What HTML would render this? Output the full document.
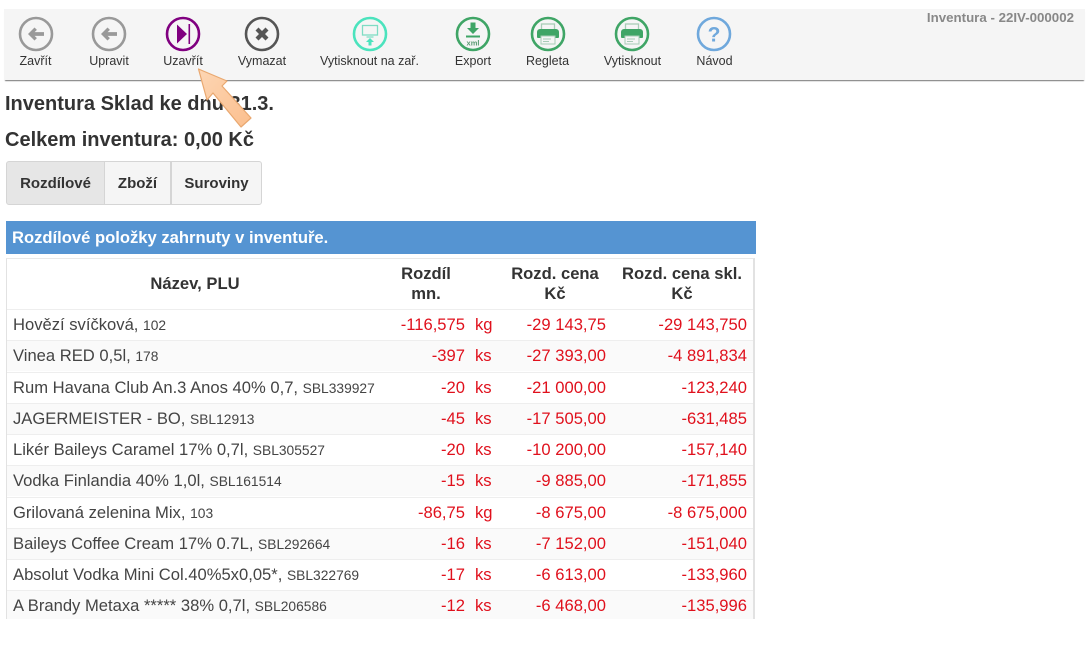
<!DOCTYPE html>
<html lang="cs">
<head>
<meta charset="utf-8">
<title>Inventura</title>
<style>
html,body{margin:0;padding:0;background:#fff;}
body{width:1088px;height:656px;position:relative;overflow:hidden;font-family:"Liberation Sans",sans-serif;color:#333;}
.a{position:absolute;white-space:nowrap;}
#bar{left:4px;top:9px;width:1081px;height:71px;background:#f5f5f5;box-shadow:0 2px 1px -1px #777;}
.lb{font-size:12.500px;top:54px;line-height:14px;transform:translateX(-50%);color:#333;}
svg.i{position:absolute;top:15.500px;width:36px;height:36px;}
.h{font-weight:bold;font-size:20px;line-height:22px;color:#333;left:5px;}
.tab{top:161px;height:42px;border:1px solid #d5d5d5;background:#f5f5f5;font-weight:bold;font-size:15px;line-height:43px;text-align:center;}
#tw{left:6px;top:258px;width:749px;height:361px;overflow:hidden;border-left:1px solid #e2e2e2;border-right:2px solid #e2e2e2;border-top:1px solid #e8e8e8;box-sizing:border-box;}
.r{position:absolute;left:0;width:747px;height:31px;border-top:1px solid #eee;box-sizing:border-box;}
.t{position:absolute;font-size:16.600px;line-height:20px;white-space:nowrap;top:5px;}
.n{left:6px;color:#444;}
.n small{font-size:13.800px;}
.m{color:#e0101c;}
.u{left:468px;}.q{right:289px;}.p{right:148px;}.s{right:7px;}
.th{position:absolute;font-weight:bold;font-size:16.600px;line-height:20px;text-align:center;color:#333;}
</style>
</head>
<body>
<div class="a" id="bar"></div>

<svg class="i" style="left:18px" viewBox="0 0 36 36"><circle cx="18" cy="18" r="16" fill="none" stroke="#999" stroke-width="2.600"/><path d="M10 18l6.500-6.500 2.400 2.400-2.300 2.200h9.400v3.800h-9.400l2.300 2.200-2.400 2.400z" fill="#999"/></svg>
<svg class="i" style="left:91px" viewBox="0 0 36 36"><circle cx="18" cy="18" r="16" fill="none" stroke="#999" stroke-width="2.600"/><path d="M10 18l6.500-6.500 2.400 2.400-2.300 2.200h9.400v3.800h-9.400l2.300 2.200-2.400 2.400z" fill="#999"/></svg>
<svg class="i" style="left:165px" viewBox="0 0 36 36"><circle cx="18" cy="18" r="16" fill="none" stroke="#800080" stroke-width="2.600"/><path d="M12 8.500L22 18 12 27.500z" fill="#800080"/><rect x="23.500" y="8" width="1.600" height="20" fill="#800080"/></svg>
<svg class="i" style="left:244px" viewBox="0 0 36 36"><circle cx="18" cy="18" r="16" fill="none" stroke="#555" stroke-width="2.600"/><path d="M14.500 11.500L18 15l3.500-3.500 3 3L21 18l3.500 3.500-3 3L18 21l-3.500 3.500-3-3L15 18l-3.500-3.500z" fill="#555"/></svg>
<svg class="i" style="left:352px" viewBox="0 0 36 36"><circle cx="18" cy="18" r="16" fill="none" stroke="#4be3bd" stroke-width="2.600"/><rect x="10.500" y="9.500" width="15" height="9.500" fill="none" stroke="#7fdcc4" stroke-width="1.300"/><path d="M14.500 21h7" stroke="#7fdcc4" stroke-width="1.200"/><path d="M18 22l4 4h-2.500v3.500h-3V26H14z" fill="#4be3bd"/></svg>
<svg class="i" style="left:455px" viewBox="0 0 36 36"><circle cx="18" cy="18" r="16" fill="none" stroke="#3fa566" stroke-width="2.600"/><path d="M15.500 6.500h5v5.500h3.500L18 18l-6-6h3.500z" fill="#3fa566"/><rect x="11" y="19.500" width="14" height="2" fill="#3fa566"/><text x="18" y="29.500" font-family="Liberation Sans,sans-serif" font-size="7.500" font-weight="bold" text-anchor="middle" fill="#5a9a72">xml</text></svg>
<svg class="i" style="left:530px" viewBox="0 0 36 36"><circle cx="18" cy="18" r="16" fill="none" stroke="#3fa566" stroke-width="2.600"/><rect x="11.500" y="8" width="13" height="6" fill="none" stroke="#a8cdb6" stroke-width="1.300"/><path d="M10 13h16a3 3 0 0 1 3 3v5a1 1 0 0 1-1 1H8a1 1 0 0 1-1-1v-5a3 3 0 0 1 3-3z" fill="#3fa566"/><rect x="11" y="20" width="14" height="8" fill="#f5f5f5" stroke="#a8cdb6" stroke-width="1"/><path d="M13 23h8M13 25.500h6" stroke="#8fbfa2" stroke-width=".8"/></svg>
<svg class="i" style="left:614px" viewBox="0 0 36 36"><circle cx="18" cy="18" r="16" fill="none" stroke="#3fa566" stroke-width="2.600"/><rect x="11.500" y="8" width="13" height="6" fill="none" stroke="#a8cdb6" stroke-width="1.300"/><path d="M10 13h16a3 3 0 0 1 3 3v5a1 1 0 0 1-1 1H8a1 1 0 0 1-1-1v-5a3 3 0 0 1 3-3z" fill="#3fa566"/><rect x="11" y="20" width="14" height="8" fill="#f5f5f5" stroke="#a8cdb6" stroke-width="1"/><path d="M13 23h8M13 25.500h6" stroke="#8fbfa2" stroke-width=".8"/></svg>
<svg class="i" style="left:696px" viewBox="0 0 36 36"><circle cx="18" cy="18" r="16" fill="none" stroke="#6fa8dc" stroke-width="2.600"/><text x="18" y="25.500" font-family="Liberation Sans,sans-serif" font-size="21" font-weight="bold" text-anchor="middle" fill="#6fa8dc">?</text></svg>

<div class="a lb" style="left:35.500px">Zavřít</div>
<div class="a lb" style="left:109px">Upravit</div>
<div class="a lb" style="left:183px">Uzavřít</div>
<div class="a lb" style="left:262px">Vymazat</div>
<div class="a lb" style="left:369.500px">Vytisknout na zař.</div>
<div class="a lb" style="left:473px">Export</div>
<div class="a lb" style="left:547.500px">Regleta</div>
<div class="a lb" style="left:632.500px">Vytisknout</div>
<div class="a lb" style="left:714.500px">Návod</div>

<div class="a" style="right:14px;top:10px;font-size:13.300px;line-height:15px;font-weight:bold;color:#888;">Inventura - 22IV-000002</div>

<div class="a h" style="top:93px">Inventura Sklad ke dnu 31.3.</div>
<div class="a h" style="top:129px">Celkem inventura: 0,00 Kč</div>

<svg class="a" style="left:0;top:0;width:300px;height:140px" viewBox="0 0 300 140"><defs><linearGradient id="g" x1="0" y1="0" x2="1" y2="1"><stop offset="0" stop-color="#fdd6b4"/><stop offset="1" stop-color="#fbbf8e"/></linearGradient></defs><path d="M198.500 69L227 81 222 86 251 118 241 127 213 93 207 100z" fill="url(#g)" stroke="#e9a870" stroke-width="1.200" stroke-linejoin="round"/></svg>

<div class="a tab" style="left:6px;width:97px;background:#e6e6e6;border-radius:3px 0 0 3px;">Rozdílové</div>
<div class="a tab" style="left:104px;width:65px;">Zboží</div>
<div class="a tab" style="left:171px;width:89px;border-radius:0 3px 3px 0;">Suroviny</div>

<div class="a" style="left:6px;top:221px;width:750px;height:33px;background:#5594d2;color:#fff;font-weight:bold;font-size:16.600px;line-height:33px;text-indent:6px;">Rozdílové položky zahrnuty v inventuře.</div>

<div class="a" id="tw">
  <div class="th" style="left:0;top:15px;width:376px;">Název, PLU</div>
  <div class="th" style="left:379px;top:5px;width:80px;">Rozdíl<br>mn.</div>
  <div class="th" style="left:488px;top:5px;width:120px;">Rozd. cena<br>Kč</div>
  <div class="th" style="left:605px;top:5px;width:140px;">Rozd. cena skl.<br>Kč</div>

  <div class="r" style="top:50px;background:#fff"><div class="t n">Hovězí svíčková, <small>102</small></div><div class="t m q">-116,575</div><div class="t m u">kg</div><div class="t m p">-29 143,75</div><div class="t m s">-29 143,750</div></div>
  <div class="r" style="top:81px;background:#fafafa"><div class="t n">Vinea RED 0,5l, <small>178</small></div><div class="t m q">-397</div><div class="t m u">ks</div><div class="t m p">-27 393,00</div><div class="t m s">-4 891,834</div></div>
  <div class="r" style="top:113px;background:#fff"><div class="t n">Rum Havana Club An.3 Anos 40% 0,7, <small>SBL339927</small></div><div class="t m q">-20</div><div class="t m u">ks</div><div class="t m p">-21 000,00</div><div class="t m s">-123,240</div></div>
  <div class="r" style="top:144px;background:#fafafa"><div class="t n">JAGERMEISTER - BO, <small>SBL12913</small></div><div class="t m q">-45</div><div class="t m u">ks</div><div class="t m p">-17 505,00</div><div class="t m s">-631,485</div></div>
  <div class="r" style="top:175px;background:#fff"><div class="t n">Likér Baileys Caramel 17% 0,7l, <small>SBL305527</small></div><div class="t m q">-20</div><div class="t m u">ks</div><div class="t m p">-10 200,00</div><div class="t m s">-157,140</div></div>
  <div class="r" style="top:206px;background:#fafafa"><div class="t n">Vodka Finlandia 40% 1,0l, <small>SBL161514</small></div><div class="t m q">-15</div><div class="t m u">ks</div><div class="t m p">-9 885,00</div><div class="t m s">-171,855</div></div>
  <div class="r" style="top:238px;background:#fff"><div class="t n">Grilovaná zelenina Mix, <small>103</small></div><div class="t m q">-86,75</div><div class="t m u">kg</div><div class="t m p">-8 675,00</div><div class="t m s">-8 675,000</div></div>
  <div class="r" style="top:269px;background:#fafafa"><div class="t n">Baileys Coffee Cream 17% 0.7L, <small>SBL292664</small></div><div class="t m q">-16</div><div class="t m u">ks</div><div class="t m p">-7 152,00</div><div class="t m s">-151,040</div></div>
  <div class="r" style="top:300px;background:#fff"><div class="t n">Absolut Vodka Mini Col.40%5x0,05*, <small>SBL322769</small></div><div class="t m q">-17</div><div class="t m u">ks</div><div class="t m p">-6 613,00</div><div class="t m s">-133,960</div></div>
  <div class="r" style="top:331px;background:#fafafa"><div class="t n">A Brandy Metaxa ***** 38% 0,7l, <small>SBL206586</small></div><div class="t m q">-12</div><div class="t m u">ks</div><div class="t m p">-6 468,00</div><div class="t m s">-135,996</div></div>
</div>
</body>
</html>
